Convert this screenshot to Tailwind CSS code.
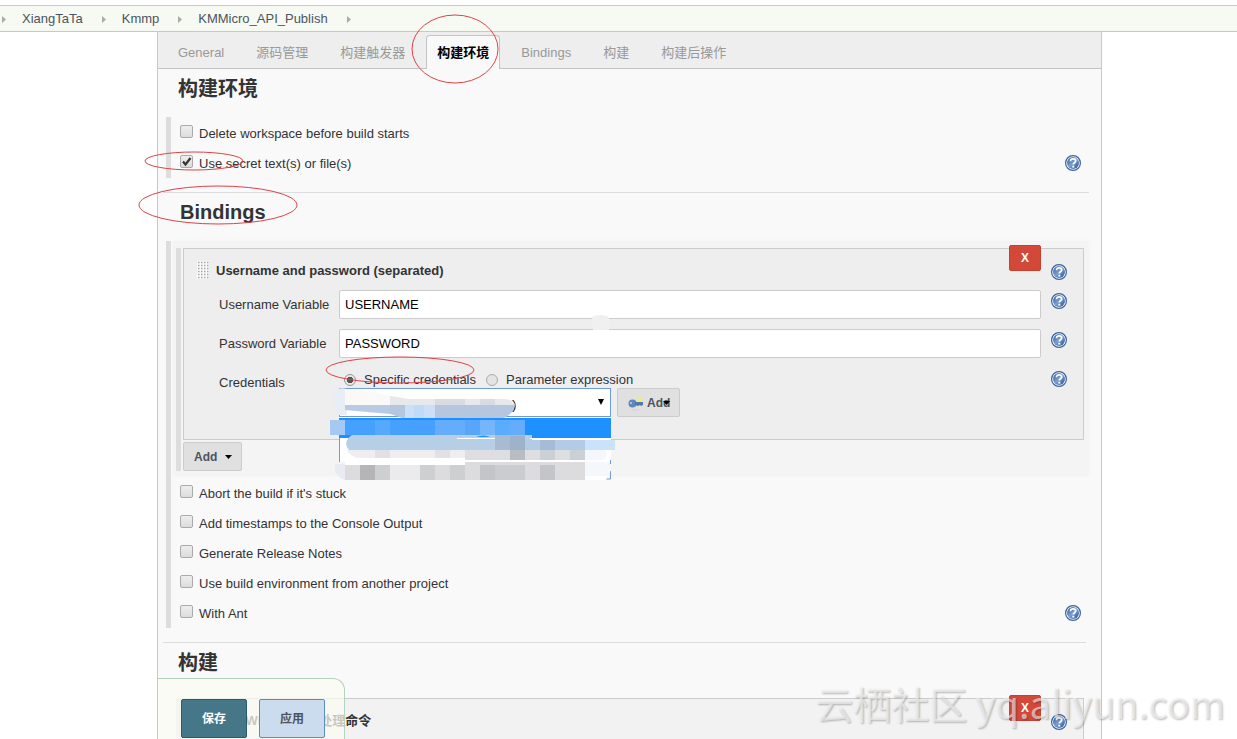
<!DOCTYPE html>
<html lang="zh-CN">
<head>
<meta charset="utf-8">
<meta name="viewport" content="width=device-width, initial-scale=1">
<title>KMMicro_API_Publish Config</title>
<script src="https://cdn.jsdelivr.net/npm/@tailwindcss/browser@4"></script>
</head>
<body class="relative flex min-h-screen flex-col overflow-x-hidden bg-white pt-[5px] font-['Liberation_Sans','Noto_Sans_CJK_SC',sans-serif] text-[13px] leading-5 text-[#333]">

<svg class="absolute size-0" aria-hidden="true">
  <defs>
    <linearGradient id="helpFill" x1="0" y1="0" x2="1" y2="1">
      <stop offset="0" stop-color="#2f5a9c"/><stop offset=".5" stop-color="#7c9fd0"/><stop offset="1" stop-color="#234d90"/>
    </linearGradient>
  </defs>
  <symbol id="help" viewBox="0 0 16 16">
    <circle cx="8" cy="8" r="7.4" fill="#fff" stroke="#3a6199" stroke-width="1.2"/>
    <circle cx="8" cy="8" r="6" fill="url(#helpFill)"/>
    <path d="M5.5 6.2C5.5 4.600 6.600 3.800 8.100 3.800s2.600.8 2.600 2.100c0 1.900-2.400 1.800-2.400 3.700" fill="none" stroke="#fff" stroke-width="1.800"/>
    <rect x="7.300" y="10.700" width="2" height="1.900" fill="#fff"/>
  </symbol>
  <symbol id="grip" viewBox="0 0 12 18">
    <rect width="12" height="18" fill="#fafafa"/>
    <path d="M1 1.500h11M1 4.500h11M1 7.500h11M1 10.500h11M1 13.500h11M1 16.500h11" stroke="#a8a8a8" stroke-width="1.400" stroke-dasharray="1.500 1.500"/>
  </symbol>
</svg>

<nav aria-label="Breadcrumb" class="flex h-[27px] items-center border-y border-[#c8c9c4] bg-[#f6faf2] pt-px pl-[2px] text-[#4d545d]">
  <svg class="mr-4 h-[7px] w-1" viewBox="0 0 4 7"><path d="M0 0l4 3.500L0 7z" fill="#aaa"/></svg>
  <a href="#">XiangTaTa</a>
  <svg class="mr-4 ml-[19px] h-[7px] w-1" viewBox="0 0 4 7"><path d="M0 0l4 3.500L0 7z" fill="#aaa"/></svg>
  <a href="#">Kmmp</a>
  <svg class="mr-4 ml-[19px] h-[7px] w-1" viewBox="0 0 4 7"><path d="M0 0l4 3.500L0 7z" fill="#aaa"/></svg>
  <a href="#">KMMicro_API_Publish</a>
  <svg class="ml-[19px] h-[7px] w-1" viewBox="0 0 4 7"><path d="M0 0l4 3.500L0 7z" fill="#aaa"/></svg>
</nav>

<main class="relative mr-[135px] ml-[157px] flex flex-1 flex-col border-x border-[#c8c8c8] bg-[#f9f9f9]">
  <div role="tablist" class="flex h-[37px] items-end border-b border-[#c4c4c4] bg-[#eee] pl-1 text-[#999]">
    <button role="tab" class="mx-[5px] h-[33px] px-[11px] pt-[2px]">General</button>
    <button role="tab" class="mx-[5px] h-[33px] px-[11px] pt-[2px]">源码管理</button>
    <button role="tab" class="mx-[5px] h-[33px] px-[11px] pt-[2px]">构建触发器</button>
    <button role="tab" aria-selected="true" class="mx-[5px] -mb-px h-[34px] rounded-t border border-b-0 border-[#c4c4c4] bg-[#f9f9f9] px-[10px] font-bold text-black">构建环境</button>
    <button role="tab" class="mx-[5px] h-[33px] px-[11px] pt-[2px]">Bindings</button>
    <button role="tab" class="mx-[5px] h-[33px] px-[11px] pt-[2px]">构建</button>
    <button role="tab" class="mx-[5px] h-[33px] px-[11px] pt-[2px]">构建后操作</button>
  </div>

  <form class="flex flex-1 flex-col">
    <h2 class="flex h-[38px] items-center pt-[2px] pl-5 text-xl font-bold">构建环境</h2>

    <div class="mt-[10px] mr-3 ml-2 border-l-[5px] border-[#ddd] pt-px pl-[9px]">
      <div class="flex h-[30px] items-center">
        <input id="c1" type="checkbox" class="mr-[6px] mb-1 size-[13px] appearance-none rounded-xs border border-[#aaa] bg-linear-to-b from-[#eee] to-[#dcdcdc]">
        <label for="c1" class="pt-[2px]">Delete workspace before build starts</label>
      </div>
      <div class="flex h-[30px] items-center">
        <span class="relative mr-[6px] mb-1 flex">
          <input id="c2" type="checkbox" checked class="size-[13px] appearance-none rounded-xs border border-[#aaa] bg-linear-to-b from-[#eee] to-[#dcdcdc]">
          <svg class="pointer-events-none absolute inset-0 size-[13px]" viewBox="0 0 13 13"><path d="M3 6.500l2.500 3L10.500 3" fill="none" stroke="#333" stroke-width="2.200"/></svg>
        </span>
        <label for="c2" class="pt-[2px]">Use secret text(s) or file(s)</label>
        <a href="#" aria-label="Help" class="mr-2 ml-auto"><svg class="size-4"><use href="#help"/></svg></a>
      </div>
    </div>

    <hr class="mt-[14px] mr-3 ml-[5px] border-[#ddd]">
    <h2 class="flex h-[38px] items-center pl-[22px] text-xl font-bold">Bindings</h2>

    <div class="mt-[10px] mr-3 ml-2 border-l-[5px] border-[#ddd] pl-[2px]">
      <div class="mb-[2px] bg-[#f4f4f4] pt-[7px] pr-[5px] pb-[5px] pl-[3px] shadow-[0_0_4px_#f4f4f4]">
        <div class="border-l-[5px] border-[#ddd] pl-[2px]">
          <fieldset class="h-[192px] border border-[#ccc] bg-[#eee] pr-4">
            <div class="flex h-[41px] items-center pl-[13px]">
              <svg class="mr-[7px] h-[18px] w-3"><use href="#grip"/></svg>
              <b class="pt-[2px]">Username and password (separated)</b>
              <button type="button" class="-mt-1 ml-auto h-[26px] w-8 self-start rounded-xs border border-[#c94033] bg-[#d24939] text-xs font-bold text-white">X</button>
              <a href="#" aria-label="Help" class="mt-1 ml-[10px]"><svg class="size-4"><use href="#help"/></svg></a>
            </div>
            <div class="flex pl-[35px]">
              <label for="u" class="w-[120px] shrink-0 pt-[5px]">Username Variable</label>
              <input id="u" value="USERNAME" class="h-[29px] min-w-0 flex-1 rounded-xs border border-[#ccc] bg-white px-[5px] text-black">
              <a href="#" aria-label="Help" class="mt-[3px] ml-[10px]"><svg class="size-4"><use href="#help"/></svg></a>
            </div>
            <div class="mt-[10px] flex pl-[35px]">
              <label for="p" class="w-[120px] shrink-0 pt-[5px]">Password Variable</label>
              <input id="p" value="PASSWORD" class="h-[29px] min-w-0 flex-1 rounded-xs border border-[#ccc] bg-white px-[5px] text-black">
              <a href="#" aria-label="Help" class="mt-[3px] ml-[10px]"><svg class="size-4"><use href="#help"/></svg></a>
            </div>
            <div class="mt-[10px] flex pl-[35px]">
              <label for="cred" class="w-[120px] shrink-0 pt-[5px]">Credentials</label>
              <div class="min-w-0 flex-1">
                <div class="flex h-5 items-center pt-1">
                  <input id="r1" type="radio" name="kind" checked class="mr-2 ml-[5px] size-3 appearance-none rounded-full border border-[#999] bg-[radial-gradient(circle,#555_3px,#e8e8e8_3px)]">
                  <label for="r1">Specific credentials</label>
                  <input id="r2" type="radio" name="kind" class="mr-2 ml-[10px] size-3 appearance-none rounded-full border border-[#aaa] bg-[#e4e4e4]">
                  <label for="r2">Parameter expression</label>
                </div>
                <div class="relative flex">
                  <select id="cred" class="h-[29px] w-[272px] appearance-none border border-[#6f9ae0] bg-white pt-1 pl-[172px] text-black"><option>)</option></select>
                  <svg class="pointer-events-none absolute top-[11px] left-[259px] h-[6px] w-[6px]" viewBox="0 0 6 6"><path d="M0 0h6L3 6z" fill="#000"/></svg>
                  <button type="button" class="relative ml-[6px] flex h-[29px] w-[63px] items-center rounded-xs border border-[#ccc] bg-[#e0e0e0] pl-[10px] text-xs font-bold text-[#4d545d]">
                    <svg class="mr-1 h-4 w-[15px]" viewBox="0 0 15 16"><path d="M12 2v5M10 4.500h4" stroke="#f4ee65" stroke-width="2.500"/><circle cx="4.500" cy="8.500" r="4" fill="#5f87bc"/><path d="M7 7h8v3l-2 1-1-1-2 1-3-1z" fill="#4e79ae"/><circle cx="3" cy="8" r="1" fill="#c7d7e8"/><path d="M4 15h7" stroke="#d2d2d2"/></svg>Add
                    <svg class="absolute top-3 left-[45px] h-1 w-[7px]" viewBox="0 0 7 4"><path d="M0 0h7L3.500 4z" fill="#000"/></svg>
                  </button>

                  <!-- Open credential list with its names smudged out -->
                  <svg class="pointer-events-none absolute top-[-76px] left-[-14px] h-[175px] w-[300px]" viewBox="325 312 300 175">
                    <path d="M592 317q8-4 17 0v13h-16z" fill="#f0f0f0"/>
                    <path d="M339 417h272v45H339zM345 462h262v18H345z" fill="#fff"/>
                    <path d="M339.500 438v24M610.500 460v4M610.500 471v8h-4" fill="none" stroke="#6f9ae0"/>
                    <path d="M339 418h272v20H339z" fill="#1e90ff"/>
                    <path d="M333 391q6-4 14-2v26h-8q-8-12-6-24z" fill="#e9edf5"/>
                    <path d="M345 389q24 1 45 7l19 3v6h-64z" fill="#faf9f7"/>
                    <path d="M390 396l19 3h94q11 0 12 6H390z" fill="#e6e8ec"/>
                    <path d="M435 399h30v6h-30zM480 399h15v6h-15z" fill="#d8dbe1"/>
                    <path d="M345 405h45v9l-45-4z" fill="#b9cbe4"/>
                    <path d="M390 405h125q-1 8-11 13H402l-12-4z" fill="#b5c7df"/>
                    <path d="M405 405h30v13h-30z" fill="#cbe0f8"/>
                    <path d="M414 405h10v13h-10z" fill="#c0dbf8"/>
                    <path d="M330 420h15v15h-15z" fill="#a4c9f2"/>
                    <path d="M345 420h90v15h-90z" fill="#45a1fd"/><path d="M375 420h15v15h-15z" fill="#55a9ff"/>
                    <path d="M435 420h90v15h-90z" fill="#63adfc"/><path d="M465 420h15v15h-15z" fill="#58a6fa"/><path d="M480 420h15v15h-15z" fill="#75b5fa"/><path d="M495 420h15v15h-15z" fill="#5aacff"/>
                    <path d="M352 435h180v15H349q-7-8 3-15z" fill="#b7cfe6"/>
                    <path d="M457 438.500h41M530 438.500h68" stroke="#fff"/>
                    <path d="M476 437q8-3 14 0z" fill="#1e90ff"/>
                    <path d="M495 435h30v15h-30z" fill="#a9bbd3"/><path d="M510 436h15v14h-15z" fill="#9db2cb"/>
                    <path d="M525 440h60v10h-60z" fill="#b3cbe5"/><path d="M540 440h15v10h-15z" fill="#a4bcd8"/><path d="M585 440h30v10h-30z" fill="#cbe3fa"/>
                    <path d="M347 450h153v8H360q-10-1-13-8z" fill="#edeef0"/>
                    <path d="M375 450h15v8h-15zM435 450h15v8h-15z" fill="#e0e1e4"/>
                    <path d="M465 450h120v10H465z" fill="#dcdee2"/>
                    <path d="M510 450h15v10h-15z" fill="#b8bdc4"/><path d="M540 450h15v10h-15zM570 450h15v10h-15z" fill="#cbd0d6"/>
                    <path d="M585 450h20q4 8-3 10h-17z" fill="#f4f7fb"/>
                    <path d="M465 462h120v3H465z" fill="#dcdcde"/>
                    <path d="M345 465h240v15H345z" fill="#dcdcde"/>
                    <path d="M335 464h10v16q-12-4-10-16z" fill="#e8ebf1"/>
                    <path d="M360 465h15v15h-15z" fill="#b5b5b7"/><path d="M375 465h15v15h-15zM420 465h15v15h-15zM450 465h15v15h-15z" fill="#cecfd1"/>
                    <path d="M480 465h15v15h-15zM540 465h15v15h-15z" fill="#c3c5c8"/><path d="M390 465h30v15h-30z" fill="#ebebed"/><path d="M495 465h30v15h-30z" fill="#cbccd0"/>
                    <path d="M585 462h20q8 6 4 14h-24z" fill="#f4f7fb"/>
                  </svg>
                </div>
              </div>
              <a href="#" aria-label="Help" class="mt-[3px] ml-[10px]"><svg class="size-4"><use href="#help"/></svg></a>
            </div>
          </fieldset>
          <button type="button" class="mt-[2px] flex h-[29px] w-[59px] items-center rounded-xs border border-[#ccc] bg-[#e0e0e0] pl-[10px] text-xs font-bold text-[#4d545d]">Add
            <svg class="ml-2 h-1 w-[7px]" viewBox="0 0 7 4"><path d="M0 0h7L3.500 4z" fill="#000"/></svg>
          </button>
        </div>
      </div>

      <div class="pl-[7px]">
        <div class="flex h-[30px] items-center">
          <input id="c3" type="checkbox" class="mr-[6px] mb-1 size-[13px] appearance-none rounded-xs border border-[#aaa] bg-linear-to-b from-[#eee] to-[#dcdcdc]">
          <label for="c3" class="pt-[2px]">Abort the build if it's stuck</label>
        </div>
        <div class="flex h-[30px] items-center">
          <input id="c4" type="checkbox" class="mr-[6px] mb-1 size-[13px] appearance-none rounded-xs border border-[#aaa] bg-linear-to-b from-[#eee] to-[#dcdcdc]">
          <label for="c4" class="pt-[2px]">Add timestamps to the Console Output</label>
        </div>
        <div class="flex h-[30px] items-center">
          <input id="c5" type="checkbox" class="mr-[6px] mb-1 size-[13px] appearance-none rounded-xs border border-[#aaa] bg-linear-to-b from-[#eee] to-[#dcdcdc]">
          <label for="c5" class="pt-[2px]">Generate Release Notes</label>
        </div>
        <div class="flex h-[30px] items-center">
          <input id="c6" type="checkbox" class="mr-[6px] mb-1 size-[13px] appearance-none rounded-xs border border-[#aaa] bg-linear-to-b from-[#eee] to-[#dcdcdc]">
          <label for="c6" class="pt-[2px]">Use build environment from another project</label>
        </div>
        <div class="flex h-[30px] items-center">
          <input id="c7" type="checkbox" class="mr-[6px] mb-1 size-[13px] appearance-none rounded-xs border border-[#aaa] bg-linear-to-b from-[#eee] to-[#dcdcdc]">
          <label for="c7" class="pt-[2px]">With Ant</label>
          <a href="#" aria-label="Help" class="mr-2 ml-auto"><svg class="size-4"><use href="#help"/></svg></a>
        </div>
      </div>
    </div>

    <hr class="mt-[14px] mr-[15px] ml-[5px] border-[#ddd]">
    <h2 class="flex h-[38px] items-center pt-[2px] pl-5 text-xl font-bold">构建</h2>

    <div class="mt-[17px] mr-[17px] ml-[18px] flex flex-1 border-l-[5px] border-[#e4e4e4] pl-[2px]">
      <div class="flex-1 border border-b-0 border-[#ccc] bg-[#f2f2f2] pr-4">
        <div class="flex h-[40px] items-center pl-[13px]">
          <svg class="mr-[7px] h-[18px] w-3"><use href="#grip"/></svg>
          <b class="pt-1">执行 Windows 批处理命令</b>
          <button type="button" class="-mt-1 ml-auto h-[26px] w-8 self-start rounded-xs border border-[#c94033] bg-[#d24939] text-xs font-bold text-white">X</button>
          <a href="#" aria-label="Help" class="mt-[6px] ml-[10px]"><svg class="size-4"><use href="#help"/></svg></a>
        </div>
      </div>
    </div>

    <!-- Save bar that stays over the bottom of the form -->
    <div class="absolute bottom-0 left-0 flex h-[61px] w-[187px] gap-3 rounded-tr-[12px] border-t border-r border-[#b4d2be] bg-[#f8fbf2]/75 pt-5 pl-[23px]">
      <button type="submit" class="h-[39px] w-[66px] rounded-xs border border-[#2f5b69] bg-[#457788] text-xs font-bold text-white">保存</button>
      <button type="button" class="h-[39px] w-[66px] rounded-xs border border-[#5c8cc4] bg-[#cbdcee] text-xs font-bold text-[#4d545d]">应用</button>
    </div>
  </form>

  <!-- Hand-drawn highlight rings -->
  <svg class="pointer-events-none absolute top-[-32px] left-[-158px] h-[400px] w-[520px]" viewBox="0 0 520 400" fill="none" stroke="#dd4248">
    <ellipse cx="455" cy="49" rx="43" ry="34"/>
    <ellipse cx="194" cy="161" rx="49" ry="9"/>
    <ellipse cx="218" cy="205" rx="79" ry="19"/>
    <ellipse cx="400" cy="370" rx="74" ry="13"/>
  </svg>
</main>

<div class="pointer-events-none absolute right-3 bottom-2 font-['Noto_Sans_CJK_SC',sans-serif] text-[38px] leading-[56px] whitespace-nowrap text-[#f8f8f8]/60 [text-shadow:1px_1px_2px_#0004]">云栖社区 yq.aliyun.com</div>
</body>
</html>
